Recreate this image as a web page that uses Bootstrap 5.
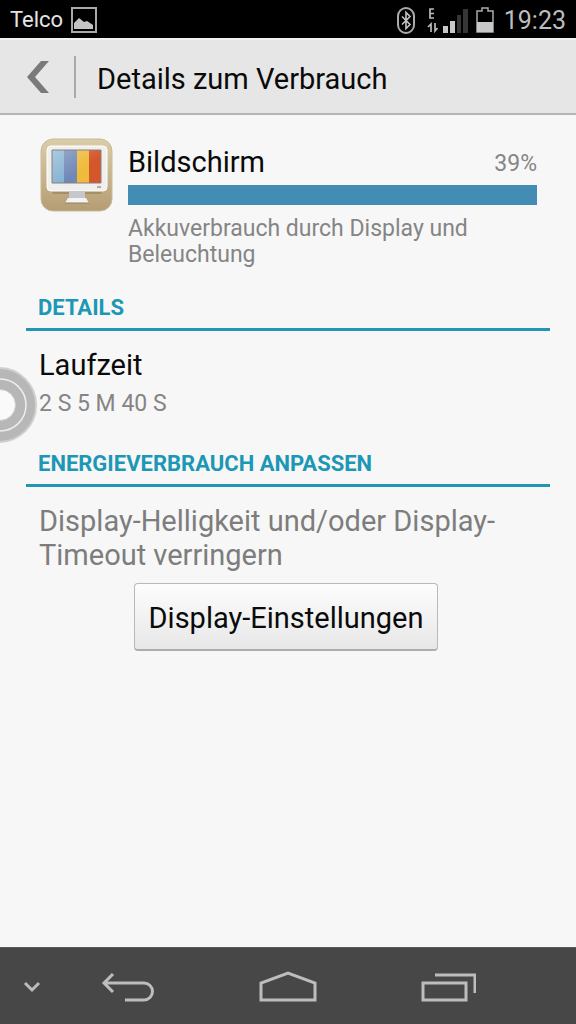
<!DOCTYPE html>
<html lang="de">
<head>
<meta charset="utf-8">
<meta name="viewport" content="width=device-width, initial-scale=1">
<title>Details zum Verbrauch</title>
<link href="https://cdn.jsdelivr.net/npm/bootstrap@5.3.0/dist/css/bootstrap.min.css" rel="stylesheet">
<style>
body { font-family: Roboto, "Liberation Sans", sans-serif; background: #f7f7f7; color: #0a0a0a; }
svg { display: block; fill: none; flex: none; }
.status-bar { height: 38px; background: #000; color: #e4e4e4; font-size: 22px; line-height: 36px; padding: 2px 10px 0; }
.clock { font-size: 25px; color: #bdbdbd; padding-top: 2px; margin-left: 10px; }
.signal { margin-left: 12px; }
.title-bar { height: 77px; background: #e6e6e6; border-top: 2px solid #f1f1f1; border-bottom: 2px solid #b5b5b5; padding-left: 20px; }
.title-rule { width: 2px; height: 42px; background: #aaa; margin-left: 18px; }
.title-text, .item-title, .btn-settings { font-size: 29px; line-height: 34px; }
.title-text { padding: 4px 0 0 21px; }
.usage { padding: 22px 39px 0; gap: 14px; }
.usage-bar { height: 20px; border-radius: 0; background: #ddd; margin-top: 6px; }
.usage-bar .progress-bar { background: #438cb3; }
.minor { font-size: 23px; line-height: 26px; color: #858585; }
.usage-note { padding: 11px 40px 0 0; }
.section-head { font-size: 22px; line-height: 26px; font-weight: 700; color: #1c98b6; border-bottom: 3px solid #2197b4; margin: 27px 26px 0; padding: 0 12px 7px; }
.section-body { padding: 17px 43px 0 39px; }
.section-body + .section-head { margin-top: 34px; }
.run-time { padding-top: 9px; }
.hint { font-size: 29px; line-height: 34px; color: #7d7d7d; }
.btn-settings { height: 68px; margin-top: 11px; padding: 2px 14px 0; color: #0a0a0a; border: 1px solid #b9b9b9; border-bottom: 2px solid #adadad; border-radius: 4px; background: linear-gradient(#fdfdfd, #e7e7e7); }
.touch-dot { left: -39px; top: 365px; width: 78px; height: 78px; background: none; }
.nav-bar { height: 77px; background: #474747; border-top: 1px solid #5a5a5a; padding-top: 2px; }
.nav-edge { flex: 2 1 0; }
.nav-side { flex: 4 1 0; }
.nav-mid { flex: 6 1 0; }
</style>
</head>
<body>
<div class="min-vh-100 d-flex flex-column position-relative overflow-hidden">
  <header>
    <div class="status-bar d-flex align-items-center">
      <span>Telco</span>
      <svg class="ms-2" width="26" height="26" viewBox="0 0 26 26" aria-hidden="true"><path d="M1 1h24v24H1z" stroke="#aaa" stroke-width="2"/><path d="M3 22v-6l5-5 5 4 3-1 6 4v4z" fill="#c4c4c4"/></svg>
      <svg class="ms-auto" width="18" height="27" viewBox="0 0 18 27" aria-label="Bluetooth"><rect x="1" y="1" width="16" height="25" rx="8" stroke="#aaa" stroke-width="2"/><path d="M5 9.500l8 8-4 4V5.500l4 4-8 8" stroke="#c4c4c4" stroke-width="1.600"/></svg>
      <svg class="signal" width="41" height="28" viewBox="0 0 41 28" aria-label="Mobilfunk"><path d="M7 3H3v9h4M3 7.500h4" stroke="#bbb" stroke-width="1.700"/><path d="M4 26v-8l-3 3M8 17v8l2.500-3" stroke="#bbb" stroke-width="1.700"/><path d="M16 20h5v7h-5zM23 15h5v12h-5z" fill="#c8c8c8"/><path d="M30 9h4v18h-4zM36 3h5v24h-5z" fill="#363636"/></svg>
      <svg class="ms-2" width="18" height="26" viewBox="0 0 18 26" aria-label="Akku"><path d="M1 25V4h5V1h6v3h5v21z" stroke="#aaa" stroke-width="1.500"/><path d="M1 15h16v10H1z" fill="#c8c8c8"/></svg>
      <span class="clock">19:23</span>
    </div>
    <div class="title-bar d-flex align-items-center">
      <button type="button" class="btn p-0 border-0" aria-label="Zurück"><svg width="36" height="36" viewBox="0 0 36 36"><path d="M21 2h8L15 18l14 16h-8L7 18z" fill="#7a7a7a"/></svg></button>
      <span class="title-rule"></span>
      <h1 class="title-text fw-normal m-0">Details zum Verbrauch</h1>
    </div>
  </header>

  <main class="flex-grow-1">
    <section class="usage d-flex">
      <svg width="75" height="76" viewBox="0 0 75 76" aria-hidden="true">
        <defs>
          <linearGradient id="tan" x2="0" y2="1"><stop stop-color="#dbcda9"/><stop offset="1" stop-color="#b59d73"/></linearGradient>
          <linearGradient id="shine" x2="1" y2="1"><stop stop-color="#fff" stop-opacity=".3"/><stop offset=".6" stop-color="#fff" stop-opacity="0"/></linearGradient>
        </defs>
        <rect x="2" y="2" width="71" height="72" rx="12" fill="url(#tan)" stroke="#c9bb9d"/>
        <path d="M12 53h52l-2 4H14z" fill="#8c7650" opacity=".5"/>
        <rect x="8" y="9" width="60" height="45" rx="4" fill="#efefed" stroke="#fff"/>
        <path d="M13 13h12v33H13z" fill="#86b3d3"/><path d="M25 13h13v33H25z" fill="#7088b7"/><path d="M38 13h12v33H38z" fill="#eebb3c"/><path d="M50 13h12v33H50z" fill="#d4562b"/>
        <path d="M13 13h49v33H13z" fill="url(#shine)" stroke="#8a7f80"/>
        <path d="M30 54h16v8H30z" fill="#c7c7cb"/><path d="M29 61h18l3 5H26z" fill="#f3f3f3"/><path d="M26 66h24" stroke="#8c8070"/>
        <path d="M58 50h4" stroke="#c9a49b" stroke-width="2"/>
      </svg>
      <div class="flex-grow-1">
        <div class="d-flex justify-content-between align-items-center pt-2">
          <h2 class="item-title fw-normal m-0">Bildschirm</h2><span class="minor pt-1">39%</span>
        </div>
        <div class="progress usage-bar" role="progressbar" aria-label="Verbrauch"><div class="progress-bar w-100"></div></div>
        <p class="minor usage-note m-0">Akkuverbrauch durch Display und Beleuchtung</p>
      </div>
    </section>
    <h3 class="section-head">DETAILS</h3>
    <section class="section-body">
      <h4 class="item-title fw-normal m-0">Laufzeit</h4>
      <p class="minor run-time m-0">2 S 5 M 40 S</p>
    </section>
    <h3 class="section-head">ENERGIEVERBRAUCH ANPASSEN</h3>
    <section class="section-body">
      <p class="hint m-0">Display-Helligkeit und/oder Display-Timeout verringern</p>
      <div class="text-center"><button type="button" class="btn btn-settings">Display-Einstellungen</button></div>
    </section>
  </main>

  <button type="button" class="touch-dot btn p-0 border-0 position-absolute" aria-label="Schnellmenü"><svg width="78" height="78" viewBox="0 0 78 78"><circle cx="38" cy="40" r="37" fill="#b7b7b7" stroke="#cfcfcf" stroke-width="2"/><circle cx="39" cy="40" r="26" stroke="#eee" stroke-width="1.500"/><circle cx="39" cy="40" r="15.500" fill="#fafafa" stroke="#ccc"/></svg></button>

  <nav class="nav-bar d-flex" aria-label="Systemnavigation">
    <button type="button" class="nav-edge btn p-0 border-0 d-flex justify-content-center align-items-center" aria-label="Leiste ausblenden"><svg width="18" height="12" viewBox="0 0 18 12"><path d="M2 2l7 7 7-7" stroke="#bbb" stroke-width="3"/></svg></button>
    <button type="button" class="nav-side btn p-0 border-0 d-flex justify-content-center align-items-center" aria-label="Zurück"><svg width="54" height="32" viewBox="0 0 54 32"><path d="M3 12h40a8 8 0 0 1 0 17H24M12 3L3 12l9 9" stroke="#bdbdbd" stroke-width="3"/></svg></button>
    <button type="button" class="nav-mid btn p-0 border-0 d-flex justify-content-center align-items-center" aria-label="Startseite"><svg width="58" height="32" viewBox="0 0 58 32"><path d="M2 29V12L29 2l27 10v17z" stroke="#bdbdbd" stroke-width="3"/></svg></button>
    <button type="button" class="nav-side btn p-0 border-0 d-flex justify-content-center align-items-center" aria-label="Letzte Apps"><svg width="56" height="32" viewBox="0 0 56 32"><path d="M3 12h43v17H3zM15 4h40v18" stroke="#bdbdbd" stroke-width="3"/></svg></button>
    <span class="nav-edge"></span>
  </nav>
</div>
<script src="https://cdn.jsdelivr.net/npm/bootstrap@5.3.0/dist/js/bootstrap.bundle.min.js"></script>
</body>
</html>
